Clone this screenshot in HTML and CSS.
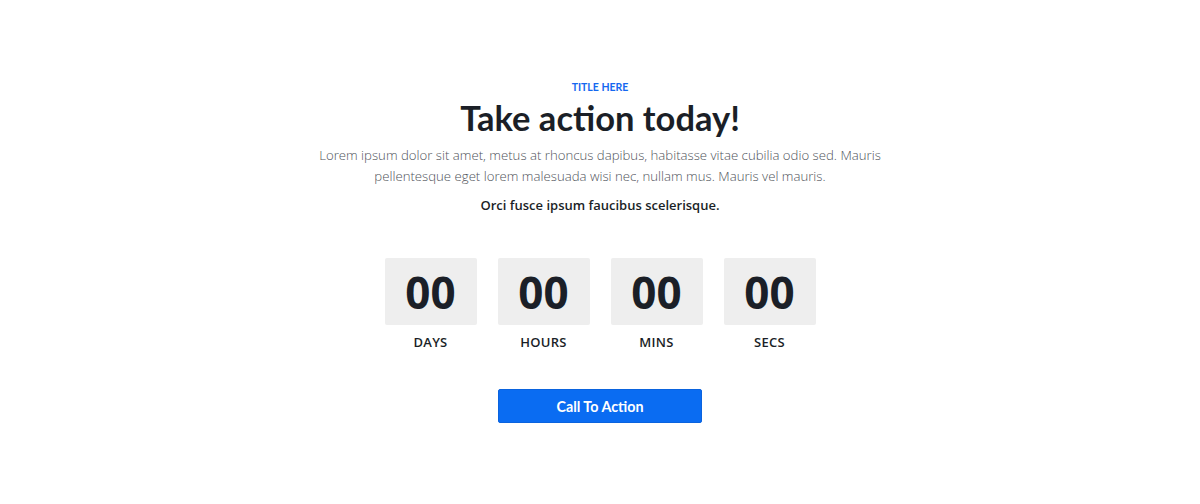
FILE: index.html
```html
<!DOCTYPE html>
<html>
<head>
<meta charset="utf-8">
<link rel="stylesheet" href="styles.css">
</head>
<body>
<section class="hero">
  <div class="eyebrow">TITLE HERE</div>
  <h1 class="title">Take action today!</h1>
  <p class="lead">Lorem ipsum dolor sit amet, metus at rhoncus dapibus, habitasse vitae cubilia odio sed. Mauris pellentesque eget lorem malesuada wisi nec, nullam mus. Mauris vel mauris.</p>
  <p class="strong">Orci fusce ipsum faucibus scelerisque.</p>
  <div class="countdown">
    <div class="unit"><div class="box">00</div><div class="label">DAYS</div></div>
    <div class="unit"><div class="box">00</div><div class="label">HOURS</div></div>
    <div class="unit"><div class="box">00</div><div class="label">MINS</div></div>
    <div class="unit"><div class="box">00</div><div class="label">SECS</div></div>
  </div>
  <a class="cta" href="#">Call To Action</a>
</section>
</body>
</html>
```
FILE: styles.css
```css
* { box-sizing: border-box; }
html, body { margin: 0; padding: 0; background: #fff; }
body { font-family: "Open Sans", "Noto Sans", sans-serif; color: #1b1f27; }
.hero {
  display: flex;
  flex-direction: column;
  align-items: center;
  padding-top: 80px;
}
.eyebrow {
  font-family: "Lato", "Open Sans", sans-serif;
  font-size: 10.5px;
  font-weight: 700;
  color: #1468f0;
  letter-spacing: 0;
  line-height: 15px;
}
.title {
  margin: 2px 0 0;
  font-family: "Lato", "Open Sans", sans-serif;
  font-size: 34.5px;
  font-weight: 700;
  line-height: 42px;
  color: #1b1f27;
}
.lead {
  margin: 6px 0 0;
  width: 580px;
  text-align: center;
  font-size: 13.2px;
  line-height: 21px;
  color: #4f535a;
  font-weight: 300;
}
.strong {
  margin: 8px 0 0;
  font-size: 13px;
  font-weight: 600;
  line-height: 20px;
  color: #1b1f27;
}
.countdown {
  display: flex;
  gap: 21px;
  margin-top: 43px;
}
.unit { display: flex; flex-direction: column; align-items: center; }
.box {
  width: 92px;
  height: 67px;
  background: #eeeeee;
  border-radius: 2px;
  display: flex;
  align-items: center;
  justify-content: center;
  font-size: 44px;
  font-weight: 700;
  color: #1b1f27;
}
.label {
  margin-top: 8px;
  font-size: 13px;
  font-weight: 600;
  line-height: 18px;
  color: #1b1f27;
  letter-spacing: 0.3px;
}
.cta {
  margin-top: 38px;
  width: 204px;
  height: 34px;
  background: #0a6cf2;
  border: 1px solid #0a63de;
  border-radius: 2px;
  color: #fff;
  font-family: "Lato", "Open Sans", sans-serif;
  font-size: 14.3px;
  font-weight: 700;
  display: flex;
  align-items: center;
  justify-content: center;
  text-decoration: none;
}
```
